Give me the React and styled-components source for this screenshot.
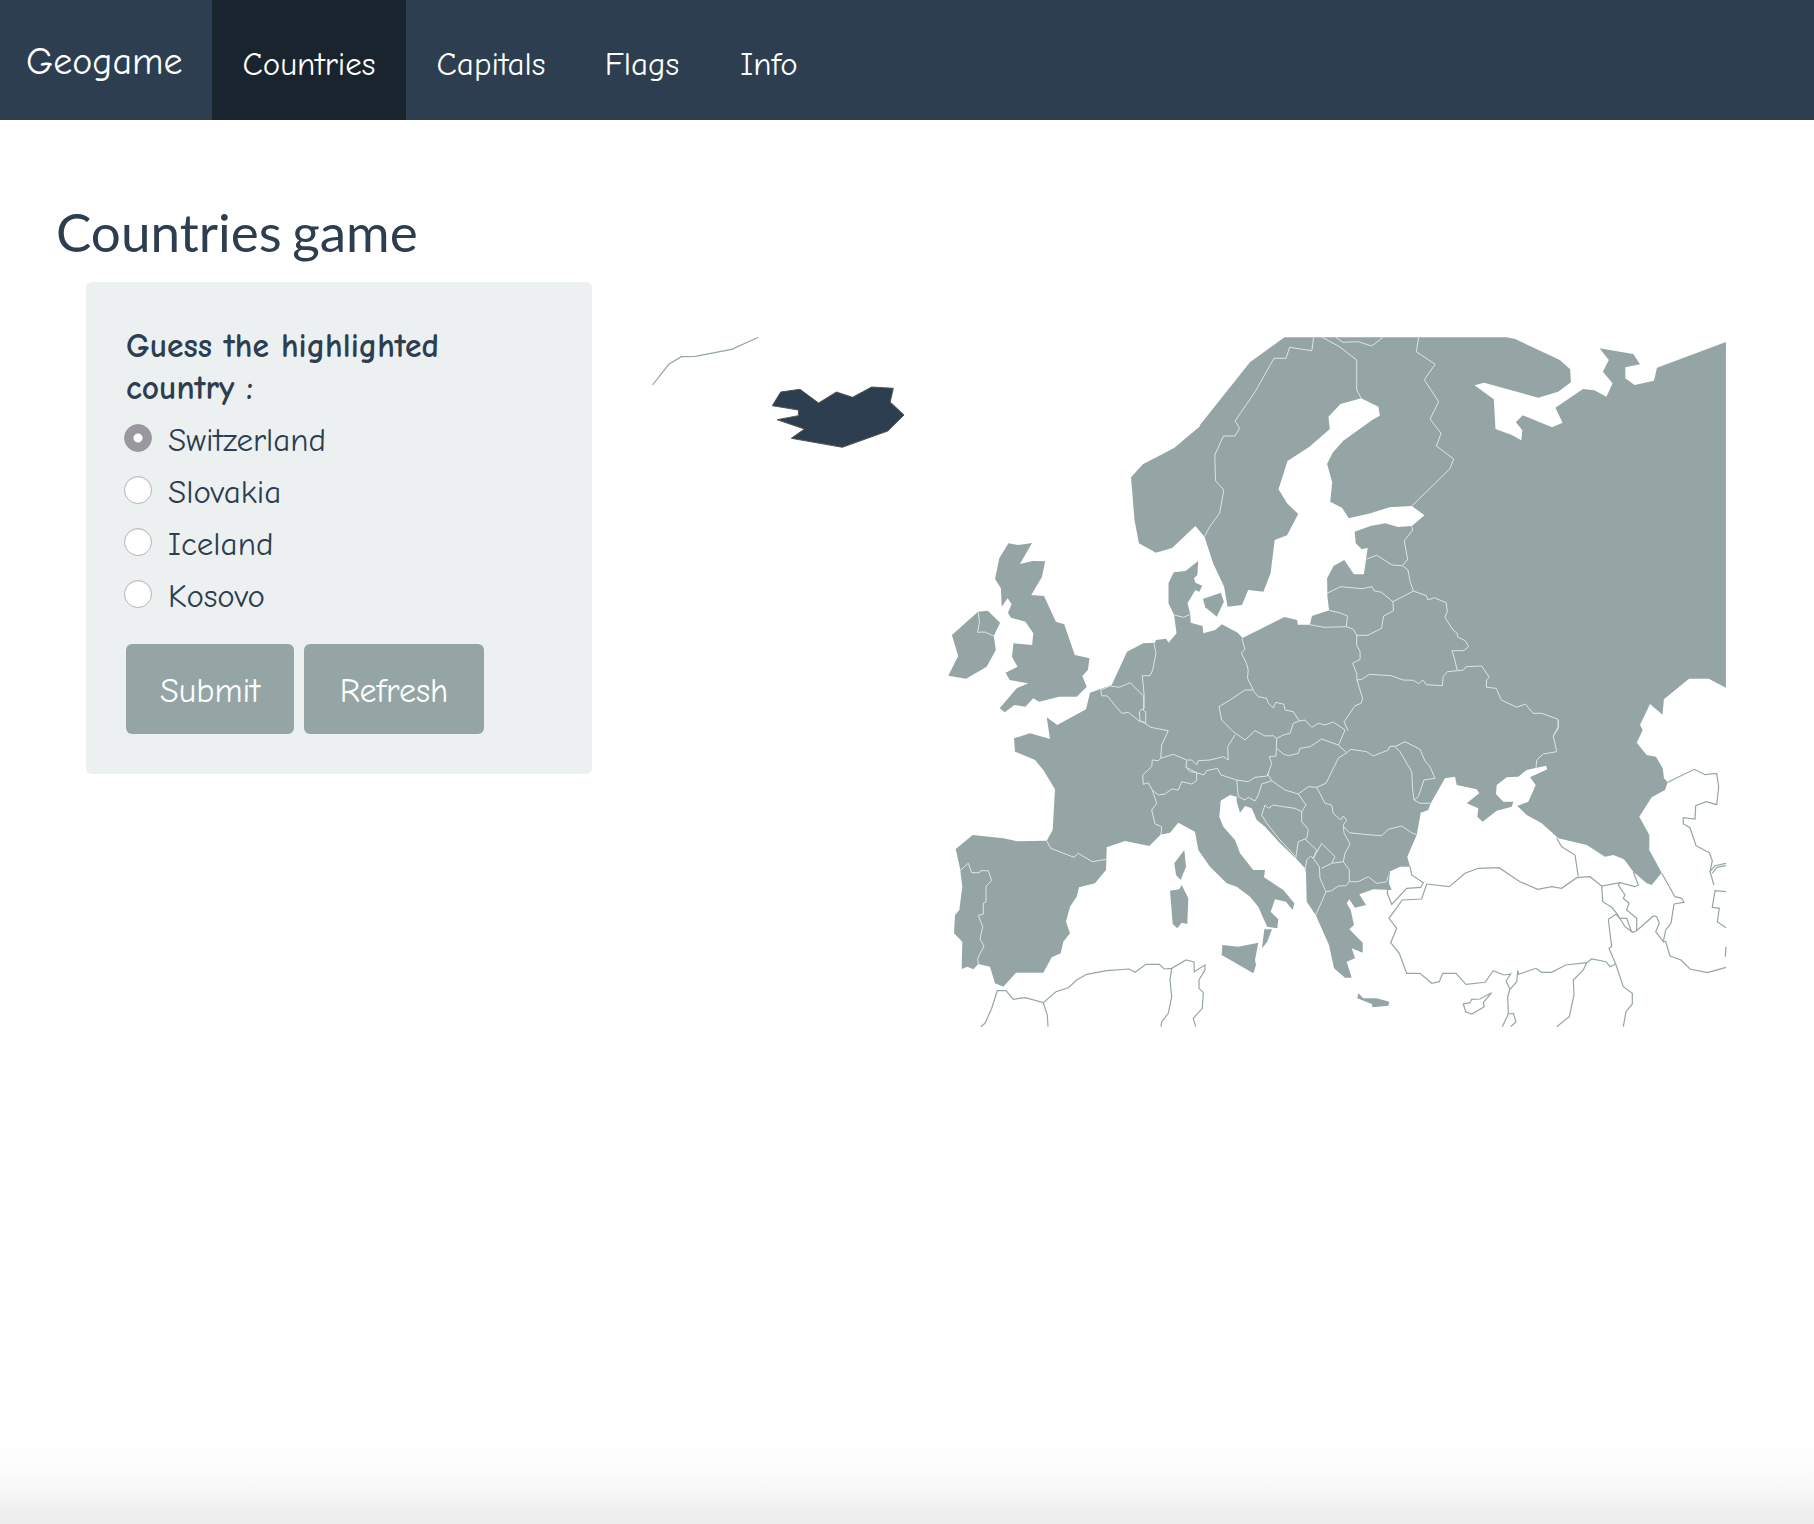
import React from 'react'
import styled, { createGlobalStyle } from 'styled-components'

const GlobalStyle = createGlobalStyle`
  html, body {
    margin: 0;
    background: #fff;
  }
`

const handFont = `"Comic Sans MS", "Comic Neue", cursive`

const Page = styled.div`
  min-height: 1524px;
  display: flex;
  flex-direction: column;
  font-family: ${handFont};
  color: #2c3e50;
`

const NavBar = styled.nav`
  height: 120px;
  display: flex;
  background: #2c3e50;
`

const Brand = styled.a`
  width: 212px;
  box-sizing: border-box;
  padding: 38px 0 0 26px;
  font-size: 38px;
  line-height: 48px;
  color: #fff;
`

const NavLink = styled.a`
  box-sizing: border-box;
  width: ${(props) => props.width}px;
  padding-top: 42px;
  text-align: center;
  font-size: 33px;
  line-height: 44px;
  color: #fff;
  background: ${(props) => (props.active ? '#1a242f' : 'transparent')};
`

const Title = styled.h1`
  margin: 81px 0 0 56px;
  font-family: Lato, sans-serif;
  font-weight: 400;
  font-size: 53px;
  word-spacing: -3px;
  line-height: 62px;
  color: #2c3e50;
`

const Content = styled.div`
  display: flex;
  align-items: flex-start;
  margin: 19px 0 0 86px;
`

const Well = styled.form`
  box-sizing: border-box;
  width: 506px;
  height: 492px;
  padding: 43px 40px 0;
  background: #ecf0f1;
  border-radius: 6px;
`

const Question = styled.div`
  width: 400px;
  font-size: 33.5px;
  font-weight: 700;
  line-height: 42px;
`

const Options = styled.div`
  display: flex;
  flex-direction: column;
  margin-top: 3px;
`

const Option = styled.label`
  height: 52px;
  display: flex;
  align-items: center;
  margin-left: -2px;
  font-size: 33px;
`

const OptionText = styled.span`
  margin-top: 4px;
`

const Radio = styled.span`
  box-sizing: border-box;
  width: 28px;
  height: 28px;
  margin-right: 16px;
  border-radius: 50%;
  flex: none;
  background: ${(props) =>
    props.checked
      ? 'radial-gradient(circle, #fff 0 4px, #98989e 5px)'
      : '#fff'};
  border: 1px solid ${(props) => (props.checked ? '#98989e' : '#b5b5b5')};
  box-shadow: ${(props) => (props.checked ? 'none' : 'inset 0 1px 1px rgba(0,0,0,0.08)')};
`

const Buttons = styled.div`
  display: flex;
  gap: 10px;
  margin-top: 24px;
`

const Button = styled.button`
  width: ${(props) => props.width}px;
  height: 90px;
  border: 0;
  border-radius: 6px;
  padding: 4px 0 0;
  background: #95a5a6;
  color: #fff;
  font-family: ${handFont};
  font-size: 34px;
`

const MapBox = styled.svg`
  display: block;
  flex: none;
  width: 1087px;
  height: 690px;
  margin: 55px 0 0 48px;
`

const Land = styled.polygon`
  fill: ${(props) => (props.active ? '#2c3e50' : '#95a5a6')};
  stroke: ${(props) => (props.active ? '#555' : 'none')};
  stroke-width: 1;
`

const Border = styled.polyline`
  fill: none;
  stroke: #dde4e4;
  stroke-width: 1;
`

const Outline = styled.polyline`
  fill: none;
  stroke: #95a5a6;
  stroke-width: 1.2;
`

const BottomFade = styled.div`
  margin-top: auto;
  height: 84px;
  background: linear-gradient(to bottom, #fff, #fdfdfd 20%, #fbfbfb 40%, #f7f7f7 61%, #f0f0f0 80%, #ededed);
`

// the outlines were traced from crops, each crop has its own origin and scale
const A = { x: 630, y: 320, sx: 620 / 1568, sy: 1 / 3 }
const B = { x: 1200, y: 320, sx: 540 / 1568, sy: 1 / 3 }
const C = { x: 930, y: 640, sx: 1 / 3, sy: 1 / 3 }
const D = { x: 1300, y: 700, sx: 1 / 3, sy: 1 / 3 }

const p = (f, s) => s.trim().split(/\s+/).map((pair) => {
  const [x, y] = pair.split(',').map(Number)
  return `${(f.x + x * f.sx).toFixed(1)},${(f.y + y * f.sy).toFixed(1)}`
}).join(' ')

const mainland = [
  p(B, `245,52 890,52 915,57 1045,120 1075,148 1077,187 1040,215 982,233 825,188 797,196 853,238 858,327 905,345 933,361 936,330 917,307 937,286 1022,322 1053,308 1032,263 1112,207 1145,211 1180,230 1198,190 1170,155 1187,120 1160,85 1258,102 1278,133 1235,142 1235,175 1262,195 1318,182 1327,143 1527,66 1527,1103 1477,1076 1420,1076 1347,1138 1343,1184`),
  p(D, `1050,12 1020,75 1028,90 1010,128 1040,165 1068,170 1088,205 1092,235 1103,247 1095,270 1055,292 1018,350 1048,405 1048,450 1085,518 1055,555 1040,550 1000,515 972,478 940,465 915,470 860,435 775,415 725,370 680,345 652,318 685,305 707,255 690,232 742,208 738,197 680,210 655,230 620,232 590,255 588,282 610,305 640,305 635,320 590,332 548,365 532,350 535,325 500,310 538,280 530,268 470,255 465,230 435,235 392,310 385,330 362,338 350,405 322,470 330,500 300,500 268,515 265,545`),
  p(C, `1385,750 1330,748 1288,763 1308,795 1275,803 1258,778 1250,790 1262,810 1272,855 1258,868 1298,908 1298,938 1265,925 1275,955 1250,965 1265,1013 1245,1013 1212,985 1197,915 1157,825 1130,785 1128,700 1125,685 1097,655 1050,610 1005,560 980,540 965,505 945,498 930,518 920,485 920,470 900,465 872,482 868,530 880,560 915,600 930,640 970,690 1005,690 1002,712 1060,750 1093,790 1088,810 1068,785 1035,778 1022,815 1045,838 1042,865 1012,860 1000,835 985,800 960,770 920,740 890,730 840,680 805,630 795,575 745,548 720,578 700,583 693,583 658,618 585,603 530,622 528,690 495,730 447,742 440,770 420,800 408,845 420,880 400,905 392,940 365,952 340,998 258,998 220,1040 195,1030 180,980 145,972 130,988 112,980 95,987 97,905 72,880 75,825 88,810 97,740 90,685 77,627 128,585 220,595 262,604 350,602 368,570 375,448 340,390 315,360 255,335 252,295 300,280 360,297 350,232 382,255 468,208 480,158 545,135`),
  p(A, `1257,995 1298,970 1328,968 1330,960 1356,956 1362,968 1382,940 1376,885 1362,850 1362,790 1375,757 1405,753 1437,723 1435,765 1426,775 1430,788 1447,797 1440,815 1430,810 1410,850 1417,883 1418,908 1448,918 1450,940 1480,930 1497,913 1537,938 1550,955`),
  p(B, `122,955 245,891 282,900 284,914 319,914 325,888 375,871 370,830 369,775 388,738 419,720 447,763 476,763 487,683 470,688 452,670 449,635 495,618 538,610 575,621 615,618 652,586 615,558 550,562 495,580 432,595 412,563 378,545 384,487 369,432 385,398 416,362 500,300 522,287 518,260 468,235 408,252 373,290 377,327 318,380 254,423 228,508 253,550 285,582 253,646 217,660 205,760 184,815 140,810 122,855 80,860 70,800 38,730 13,650`),
  p(A, `1430,618 1371,684 1330,698 1287,670 1276,600 1267,472 1297,433 1376,384 1440,320`),
  p(B, `0,315 145,127`),
].join(' ')

const islands = [
  p(A, `957,670 982,675 1017,669 986,732 1018,723 1050,724 1042,770 1015,825 1047,828 1077,905 1098,913 1125,1005 1162,1015 1158,1050 1144,1068 1155,1100 1130,1130 1085,1130 1035,1145 1020,1135 1000,1160 972,1155 948,1177 935,1165 978,1105 1007,1090 960,1080 950,1058 980,1040 966,1010 970,970 1017,975 1020,940 1000,905 963,893 956,878 965,852 955,835 940,860 938,805 923,777 934,715`),
  p(A, `880,875 905,872 936,908 920,948 925,990 902,1040 850,1076 805,1067 830,1008 814,945`),
  p(A, `1449,837 1494,818 1502,845 1484,890 1455,862`),
  p(C, `763,630 768,680 752,720 738,705 733,670`),
  p(C, `755,735 775,775 772,852 755,848 742,865 728,852 720,752 748,748`),
  p(C, `877,915 925,920 985,908 975,960 978,975 970,1000 875,945`),
  p(C, `1003,868 1026,868 1012,905 996,925`),
  p(C, `1285,1060 1300,1075 1340,1075 1378,1085 1375,1097 1328,1102 1325,1092 1282,1075`),
]

const iceland = p(A, `381,216 430,208 477,249 522,216 563,232 611,201 666,205 658,246 693,285 652,333 537,382 408,355 441,327 372,299 426,287 426,270 360,257`)

const borders = [
  p(A, `880,875 884,905 879,937 897,936 920,948`),
  p(A, `1376,885 1400,892 1417,883`),
  p(B, `330,52 325,92 260,82 250,115 215,115 160,215 102,303 115,325 102,348 68,348 43,405 45,482 69,510 57,580 28,620 13,650`),
  p(B, `355,52 405,80 455,120 455,210 468,235`),
  p(B, `395,52 415,67 460,65 498,78 532,52`),
  p(B, `635,52 628,95 683,133 651,179 693,245 668,297 700,340 686,378 737,417 725,447 615,558`),
  p(B, `615,620 618,630 593,662 603,718 588,737 558,735 513,706 484,717`),
  p(B, `588,737 604,750 610,785 620,813 657,827 662,840 680,833 715,848 718,875 711,892 735,930 747,940 747,950 770,962 780,980 765,992 732,992 740,1020 747,1052 718,1055 706,1070 704,1097 657,1094 647,1080 635,1091 620,1081 590,1080 555,1067 492,1063 470,1078 455,1080`),
  p(B, `369,820 408,800 470,806 500,800 505,812 527,817 560,845 620,813`),
  p(B, `560,845 562,872 533,888 527,925 487,946 455,946 445,928 425,920 428,888 410,880 375,871`),
  p(B, `319,914 360,922 425,920`),
  p(B, `455,946 455,975 465,995 465,1018 443,1030 455,1060 456,1080 472,1135 468,1150 450,1157 418,1205 430,1232`),
  p(B, `122,955 130,988 120,1000 135,1030 140,1050 138,1075 155,1110`),
  p(B, `747,1052 765,1050 772,1040 818,1038 840,1072 832,1080 832,1102 860,1105 875,1140 920,1162 945,1152 967,1180 992,1180 1040,1198 1040,1220 1025,1250`),
  p(D, `775,60 775,85 760,108 770,155 730,162 710,180 708,205`),
  p(C, `350,602 362,625 432,652 445,640 487,665 528,658`),
  p(C, `90,692 115,670 125,698 148,698 152,692 175,692 185,722 168,738 168,785 160,790 160,822 145,826 158,860 150,898 162,918 143,955 145,972`),
  p(C, `667,450 680,490 665,510 675,552 695,560 693,583`),
  p(C, `692,355 730,343 770,360 768,382 780,395 800,398 800,422 785,432 755,425 745,450 725,447 705,462 685,465 667,450 655,428 640,433 638,405 665,380 667,360 685,362 692,355`),
  p(C, `692,355 695,315 715,272 662,262 645,250 630,243`),
  p(C, `628,215 635,207 647,215 647,248 630,243 628,215`),
  p(C, `512,150 515,167 532,168 575,220 595,217 630,245`),
  p(C, `512,150 540,138 568,142 600,128 640,167 643,205`),
  p(C, `672,10 678,40 668,90 660,107 637,107 643,170 640,210`),
  p(C, `968,150 985,170 1010,175 1015,190 1030,203 1037,187 1062,193 1065,210 1090,215 1108,243 1125,240 1145,262 1165,250 1185,255 1210,246 1245,270`),
  p(C, `968,150 945,150 900,180 867,200 875,240 910,275 945,300 975,272 1005,288 1030,287 1040,295 1060,285 1080,280 1090,250 1108,243`),
  p(C, `915,285 893,320 895,360 880,350 840,360 805,362 800,375 785,360 772,360`),
  p(C, `768,382 800,398 822,405 830,392 862,385 873,405 920,420 955,425 975,412 1012,408 1025,370 1018,350 1038,348 1040,295`),
  p(C, `1040,325 1060,342 1075,347 1105,340 1110,325 1140,320 1175,297 1225,315`),
  p(C, `1245,270 1228,310 1225,315 1250,338`),
  p(C, `1250,338 1225,355 1188,430 1160,442 1135,440 1105,462 1065,450 1025,422 1012,400`),
  p(C, `920,420 925,470 945,480 955,472 975,483 985,465 995,432 1025,422`),
  p(C, `1005,495 995,525 1010,550 1050,600 1097,650`),
  p(C, `1005,495 1015,505 1030,495 1060,500 1095,505 1115,515 1128,495 1105,462`),
  p(C, `1115,515 1115,545 1135,568 1130,595 1105,605 1097,655`),
  p(C, `1160,442 1185,490 1205,495 1210,520 1232,540 1240,528 1250,540 1240,555 1242,578 1260,612 1245,640 1240,665`),
  p(C, `1125,597 1160,630 1150,655 1175,610 1215,650 1205,670`),
  p(C, `1125,690 1130,660 1142,648 1150,655 1168,680 1170,715 1188,755 1175,785 1157,825`),
  p(C, `1175,685 1205,670 1240,665 1258,690 1258,725 1248,737 1225,738 1205,752 1188,755`),
  p(C, `1242,560 1258,578 1300,583 1355,587 1375,568 1415,558 1445,578 1463,585`),
  p(C, `1258,725 1285,725 1315,710 1340,730 1370,725 1378,697`),
  p(C, `1250,338 1262,328 1310,335 1330,348 1375,330 1378,320 1395,318`),
  p(D, `285,140 315,125 360,148 375,183 390,200 405,235 372,240 355,290 342,300 360,310 392,310`),
  p(D, `285,140 300,155 335,215 338,270 342,300`),
]

const outlines = [
  p(A, `57,195 98,133 130,110 165,109 257,88 325,52`),
  p(C, `152,1160 165,1150 185,1105 202,1052 228,1052 250,1078 285,1073 340,1088 378,1055 415,1043 440,1020 470,1003 530,992 597,987 615,997 648,973 688,973 703,987 725,985 768,960 792,966 793,995 825,975 825,990 807,1020 807,1045 820,1058 817,1105 790,1135 797,1160`),
  p(C, `725,985 720,1020 725,1070 715,1120 695,1145 693,1160`),
  p(C, `340,1088 352,1125 354,1160`),
  p(D, `380,552 448,560 495,520 535,505 597,503 660,545 713,568 755,560 785,565 830,533 870,530 905,558 960,548 1005,560 1015,555 1000,515`),
  p(D, `770,415 785,440 825,465 835,530`),
  p(D, `960,548 955,555 975,585 970,595 987,610 980,630 1010,655 1010,692`),
  p(D, `905,558 908,605 935,622 950,640 975,680 998,697 1010,692 1060,648 1070,650 1078,670 1067,695 1090,725 1097,690 1113,670 1122,612 1152,607 1145,595 1125,590 1085,520`),
  p(D, `925,658 948,643 960,655 980,655 995,697`),
  p(D, `380,552 365,597 307,600 267,655 290,685 272,728 298,760 320,820 360,820 395,850 418,845 428,820 468,820 498,853 555,847 580,812 612,825 632,822 618,843 630,868 623,890 625,942 607,980`),
  p(D, `653,812 656,823 708,805 725,817 755,817 797,795 860,788 875,777 918,785 930,800 947,792`),
  p(D, `653,812 650,845 630,868`),
  p(D, `860,788 850,810 820,840 822,885 808,950 770,980`),
  p(D, `947,792 970,860 997,880 997,912 978,935 970,980`),
  p(D, `925,658 935,740 927,745 947,792`),
  p(D, `268,515 262,580 275,613 320,565 362,562 370,548 335,525 330,500`),
  p(D, `575,878 550,908 553,920 515,942 497,935 490,912 510,908 515,898 540,897 575,878`),
  p(D, `625,942 640,940 648,965 632,980`),
  p(D, `1090,725 1097,725 1110,768 1143,780 1170,807 1222,818 1278,802`),
  p(D, `1103,247 1183,208 1215,224 1250,220 1256,260 1250,314 1218,305 1187,317 1185,357 1150,353 1150,372 1170,383 1188,437 1228,458 1237,482 1230,515 1242,555`),
  p(D, `1230,515 1245,497 1278,490`),
  p(D, `1237,520 1250,502 1278,497`),
  p(D, `1278,575 1245,572 1237,622 1258,625 1252,665 1278,683`),
  p(D, `1278,740 1276,770`),
]

const EuropeMap = () =>
  <MapBox viewBox="640 337 1087 690">
    <Land points={mainland} />
    {islands.map((points) => <Land key={points} points={points} />)}
    <Land active points={iceland} />
    {borders.map((points) => <Border key={points} points={points} />)}
    {outlines.map((points) => <Outline key={points} points={points} />)}
  </MapBox>

const choices = ['Switzerland', 'Slovakia', 'Iceland', 'Kosovo']

const App = () =>
  <Page>
    <GlobalStyle />
    <NavBar>
      <Brand>Geogame</Brand>
      <NavLink width={194} active>Countries</NavLink>
      <NavLink width={170}>Capitals</NavLink>
      <NavLink width={132}>Flags</NavLink>
      <NavLink width={122}>Info</NavLink>
    </NavBar>
    <Title>Countries game</Title>
    <Content>
      <Well>
        <Question>Guess the highlighted country :</Question>
        <Options>
          {choices.map((name, i) =>
            <Option key={name}>
              <Radio checked={i === 0} />
              <OptionText>{name}</OptionText>
            </Option>
          )}
        </Options>
        <Buttons>
          <Button type="button" width={168}>Submit</Button>
          <Button type="button" width={180}>Refresh</Button>
        </Buttons>
      </Well>
      <EuropeMap />
    </Content>
    <BottomFade />
  </Page>

export default App
